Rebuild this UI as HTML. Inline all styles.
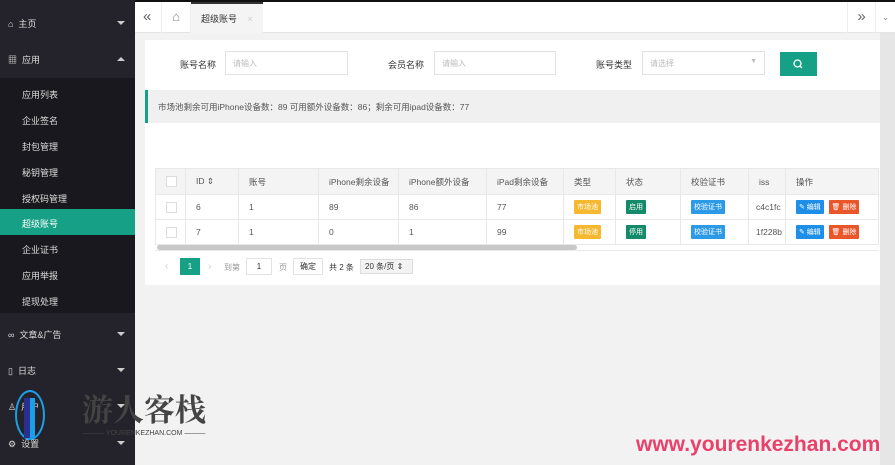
<!DOCTYPE html>
<html><head><meta charset="utf-8"><style>
*{margin:0;padding:0;box-sizing:border-box}
body{width:895px;height:465px;overflow:hidden;background:#f2f2f2;font-family:"Liberation Sans","Noto Sans CJK SC",sans-serif;font-size:9px;color:#555;position:relative}
.abs{position:absolute}
#side{left:0;top:0;width:135px;height:465px;background:#24232b}
.sub{left:0;top:78px;width:135px;height:235px;background:#19181e}
.si{position:absolute;left:22px;color:#ddd;font-size:9px}
.mi{position:absolute;left:8px;color:#ddd;font-size:9px}
.arr{position:absolute;left:117px;width:0;height:0;border-left:4px solid transparent;border-right:4px solid transparent;border-top:4px solid #ccc}
#top{left:135px;top:0;width:760px;height:33px;background:#fff;border-top:2px solid #111;border-bottom:1px solid #e4e4e4}
.card{background:#fff}
.inp{position:absolute;height:24px;border:1px solid #e2e2e2;background:#fff;color:#bbb;padding:6px 7px;font-size:8px}
.lbl{position:absolute;color:#333;font-size:9px}
table{border-collapse:collapse;position:absolute;left:155px;top:168px;width:724px;font-size:8.5px}
td{border:1px solid #e8e8e8;height:25px;padding-left:10px;color:#555}
thead td{background:#f4f4f4;height:26px}
.cb{display:inline-block;width:11px;height:11px;border:1px solid #ddd;background:#fff;vertical-align:middle}
.tag{display:inline-block;color:#fff;font-size:7px;padding:2px 3px;border-radius:1px}
</style></head><body>
<div id="side" class="abs">
<div class="abs sub"></div>
<div class="abs" style="left:0;top:209px;width:135px;height:26px;background:#16a085"></div>
<div class="mi" style="top:17px">⌂ &nbsp;主页</div><div class="arr" style="top:21px"></div>
<div class="mi" style="top:53px">▦ &nbsp;应用</div><div class="arr" style="top:57px;border-top:none;border-bottom:4px solid #ccc"></div>
<div class="si" style="top:88px">应用列表</div>
<div class="si" style="top:114px">企业签名</div>
<div class="si" style="top:140px">封包管理</div>
<div class="si" style="top:166px">秘钥管理</div>
<div class="si" style="top:192px">授权码管理</div>
<div class="si" style="top:217px;color:#fff">超级账号</div>
<div class="si" style="top:243px">企业证书</div>
<div class="si" style="top:269px">应用举报</div>
<div class="si" style="top:295px">提现处理</div>
<div class="mi" style="top:328px">∞ &nbsp;文章&amp;广告</div><div class="arr" style="top:332px"></div>
<div class="mi" style="top:364px">▯ &nbsp;日志</div><div class="arr" style="top:368px"></div>
<div class="mi" style="top:400px">♙ &nbsp;用户</div><div class="arr" style="top:404px"></div>
<div class="mi" style="top:437px">⚙ &nbsp;设置</div><div class="arr" style="top:441px"></div>
</div>
<div id="top" class="abs">
<div class="abs" style="left:8px;top:6px;font-size:15px;color:#666">«</div>
<div class="abs" style="left:26px;top:0;width:30px;height:31px;border-left:1px solid #eee;border-right:1px solid #eee;text-align:center;line-height:30px;font-size:13px;color:#888">⌂</div>
<div class="abs" style="left:56px;top:0;width:72px;height:31px;background:#f4f4f4;border-top:2px solid #333;padding:8px 10px;color:#333;font-size:9px">超级账号 <span style="color:#ccc;margin-left:8px">×</span></div>
<div class="abs" style="left:712px;top:0;width:28px;height:31px;border-left:1px solid #eee;text-align:center;line-height:30px;font-size:15px;color:#666">»</div>
<div class="abs" style="left:740px;top:0;width:20px;height:31px;border-left:1px solid #eee;text-align:center;line-height:30px;font-size:9px;color:#999">⌄</div>
</div>
<div class="abs" style="left:880px;top:33px;width:15px;height:432px;background:#e6e6e6"></div>
<div class="abs card" style="left:145px;top:40px;width:735px;height:50px"></div>
<div class="lbl" style="left:180px;top:58px">账号名称</div>
<div class="inp" style="left:225px;top:51px;width:123px">请输入</div>
<div class="lbl" style="left:388px;top:58px">会员名称</div>
<div class="inp" style="left:434px;top:51px;width:122px">请输入</div>
<div class="lbl" style="left:596px;top:58px">账号类型</div>
<div class="inp" style="left:642px;top:51px;width:123px">请选择<span style="float:right;color:#bbb;font-size:7px">▼</span></div>
<div class="abs" style="left:780px;top:52px;width:37px;height:24px;background:#16a085"><svg width="37" height="24"><circle cx="17.5" cy="11.5" r="3.5" fill="none" stroke="#fff" stroke-width="1.3"/><line x1="20" y1="14" x2="22" y2="16" stroke="#fff" stroke-width="1.3"/></svg></div>
<div class="abs" style="left:145px;top:90px;width:735px;height:33px;background:#f0f0f0;border-left:3px solid #16a085;padding:11px 10px;font-size:8.5px;color:#555">市场池剩余可用iPhone设备数：89 可用额外设备数：86；剩余可用ipad设备数：77</div>
<div class="abs card" style="left:145px;top:123px;width:735px;height:162px"></div>
<table><thead><tr><td style="width:30px"><span class="cb"></span></td><td style="width:53px">ID ⇕</td><td style="width:80px">账号</td><td style="width:80px">iPhone剩余设备</td><td style="width:88px">iPhone额外设备</td><td style="width:77px">iPad剩余设备</td><td style="width:52px">类型</td><td style="width:65px">状态</td><td style="width:68px">校验证书</td><td style="width:37px">iss</td><td>操作</td></tr></thead>
<tbody><tr><td><span class="cb"></span></td><td>6</td><td>1</td><td>89</td><td>86</td><td>77</td><td><span class="tag" style="background:#f5b82e">市场池</span></td><td><span class="tag" style="background:#138a6a">启用</span></td><td><span class="tag" style="background:#2d9ae8">校验证书</span></td><td style="padding-left:7px">c4c1fc</td><td><span class="tag" style="background:#1e8fe8">✎ 编辑</span> &nbsp;<span class="tag" style="background:#e8562a">🗑 删除</span></td></tr>
<tr><td><span class="cb"></span></td><td>7</td><td>1</td><td>0</td><td>1</td><td>99</td><td><span class="tag" style="background:#f5b82e">市场池</span></td><td><span class="tag" style="background:#138a6a">停用</span></td><td><span class="tag" style="background:#2d9ae8">校验证书</span></td><td style="padding-left:7px">1f228b</td><td><span class="tag" style="background:#1e8fe8">✎ 编辑</span> &nbsp;<span class="tag" style="background:#e8562a">🗑 删除</span></td></tr></tbody></table>
<div class="abs" style="left:157px;top:245px;width:420px;height:5px;background:#c8c8c8;border-radius:3px"></div>
<div class="abs" style="left:155px;top:250px;width:724px;height:1px;background:#e8e8e8"></div>
<div class="abs" style="left:165px;top:261px;color:#ccc;font-size:10px">‹</div>
<div class="abs" style="left:180px;top:258px;width:20px;height:17px;background:#16a085;color:#fff;text-align:center;line-height:17px;font-size:8px">1</div>
<div class="abs" style="left:208px;top:261px;color:#ccc;font-size:10px">›</div>
<div class="abs" style="left:224px;top:262px;color:#999;font-size:8px">到第</div>
<div class="abs" style="left:246px;top:258px;width:26px;height:17px;border:1px solid #e2e2e2;text-align:center;line-height:15px;font-size:8px;color:#333">1</div>
<div class="abs" style="left:279px;top:262px;color:#999;font-size:8px">页</div>
<div class="abs" style="left:293px;top:258px;width:30px;height:17px;border:1px solid #e2e2e2;text-align:center;line-height:15px;font-size:8px;color:#333">确定</div>
<div class="abs" style="left:329px;top:262px;color:#333;font-size:8px">共 2 条</div>
<div class="abs" style="left:360px;top:259px;width:53px;height:15px;border:1px solid #ddd;background:#f3f3f3;padding-left:4px;line-height:13px;font-size:8px;color:#333">20 条/页 ⇕</div>
<div class="abs" style="left:15px;top:390px;width:30px;height:50px;border:2px solid #1aa0e8;border-radius:50%"></div>
<div class="abs" style="left:24px;top:398px;width:10px;height:40px;background:#2a3090"></div>
<div class="abs" style="left:30px;top:398px;width:5px;height:40px;background:#1aa0e8"></div>
<div class="abs" style="left:82px;top:389px;font-size:31px;font-weight:bold;color:#444;font-family:'Noto Serif CJK SC',serif;line-height:38px">游人客栈</div>
<div class="abs" style="left:83px;top:430px;font-size:7px;color:#444;white-space:nowrap">——— YOURENKEZHAN.COM ———</div>
<div class="abs" style="left:636px;top:433px;font-size:21px;font-weight:bold;color:#e8416a;white-space:nowrap">www.yourenkezhan.com</div>
</body></html>
